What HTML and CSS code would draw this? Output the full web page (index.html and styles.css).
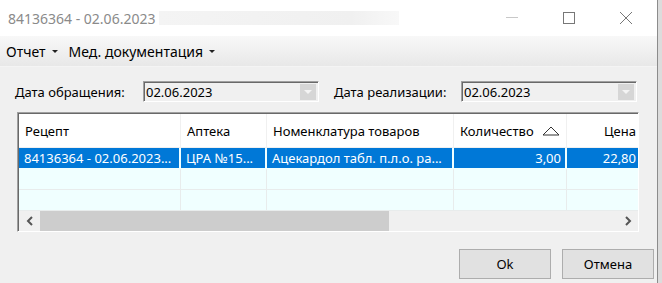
FILE: index.html
```html
<!DOCTYPE html>
<html lang="ru">
<head>
    <meta charset="UTF-8">
    <title>84136364 - 02.06.2023</title>
    <link rel="stylesheet" href="styles.css">
</head>
<body>
    <div class="window">
        <div class="titlebar">
            <span class="titlebar__text">84136364 - 02.06.2023</span>
            <span class="titlebar__blur"></span>
            <div class="titlebar__controls">
                <span class="ctl ctl--min"><svg width="14" height="14" viewBox="0 0 14 14"><path d="M1 6.5h12" stroke="#c8c8c8" stroke-width="1"/></svg></span>
                <span class="ctl ctl--max"><svg width="14" height="14" viewBox="0 0 14 14"><rect x="1.5" y="1.5" width="11" height="11" fill="none" stroke="#777" stroke-width="1"/></svg></span>
                <span class="ctl ctl--close"><svg width="14" height="14" viewBox="0 0 14 14"><path d="M1 1L13 13M13 1L1 13" stroke="#777" stroke-width="1"/></svg></span>
            </div>
        </div>

        <div class="menubar">
            <span class="menu-item">Отчет <i class="caret"></i></span>
            <span class="menu-item">Мед. документация <i class="caret"></i></span>
        </div>

        <div class="content">
            <div class="dates">
                <label class="dates__label dates__label--first">Дата обращения:</label>
                <div class="combo">
                    <span class="combo__value">02.06.2023</span>
                    <span class="combo__btn"><i></i></span>
                </div>
                <label class="dates__label dates__label--second">Дата реализации:</label>
                <div class="combo">
                    <span class="combo__value">02.06.2023</span>
                    <span class="combo__btn"><i></i></span>
                </div>
            </div>

            <div class="grid">
                <div class="grid__row grid__row--head">
                    <div class="cell c1">Рецепт</div>
                    <div class="cell c2">Аптека</div>
                    <div class="cell c3">Номенклатура товаров</div>
                    <div class="cell c4">Количество
                        <svg class="sort" width="18" height="10" viewBox="0 0 18 10"><path d="M1 9L9 1L17 9Z" fill="none" stroke="#333" stroke-width="1"/></svg>
                    </div>
                    <div class="cell c5 num">Цена</div>
                </div>
                <div class="grid__row grid__row--sel">
                    <div class="cell c1">84136364 - 02.06.2023...</div>
                    <div class="cell c2">ЦРА №15...</div>
                    <div class="cell c3">Ацекардол табл. п.л.о. ра...</div>
                    <div class="cell c4 num">3,00</div>
                    <div class="cell c5 num">22,80</div>
                </div>
                <div class="grid__row">
                    <div class="cell c1"></div><div class="cell c2"></div><div class="cell c3"></div><div class="cell c4"></div><div class="cell c5"></div>
                </div>
                <div class="grid__row">
                    <div class="cell c1"></div><div class="cell c2"></div><div class="cell c3"></div><div class="cell c4"></div><div class="cell c5"></div>
                </div>
                <div class="hscroll">
                    <span class="hscroll__arrow"><svg width="8" height="10" viewBox="0 0 8 10"><path d="M6 1L2 5L6 9" fill="none" stroke="#555" stroke-width="2"/></svg></span>
                    <span class="hscroll__thumb"></span>
                    <span class="hscroll__track"></span>
                    <span class="hscroll__arrow"><svg width="8" height="10" viewBox="0 0 8 10"><path d="M2 1L6 5L2 9" fill="none" stroke="#555" stroke-width="2"/></svg></span>
                </div>
            </div>

            <div class="actions">
                <button class="button">Ok</button>
                <button class="button">Отмена</button>
            </div>
        </div>
    </div>
    <div class="desktop"></div>
</body>
</html>
```

FILE: styles.css
```css
* {
    margin: 0;
    padding: 0;
    box-sizing: border-box;
}

body {
    display: flex;
    width: 662px;
    height: 283px;
    overflow: hidden;
    font-family: "Noto Sans", "Liberation Sans", sans-serif;
    font-size: 13px;
    color: #000;
    background: #f0f0f0;
}

.window {
    width: 658px;
    height: 283px;
    background: #f0f0f0;
    border-right: 1px solid #8c8c8c;
    display: flex;
    flex-direction: column;
}

.desktop {
    flex: 1;
    background: #dcdcdc;
}

/* Title bar */
.titlebar {
    height: 36px;
    background: #fff;
    display: flex;
    align-items: center;
    padding-left: 8px;
}

.titlebar__text {
    font-size: 14px;
    color: #8a8a8a;
}

.titlebar__blur {
    width: 240px;
    height: 14px;
    margin-left: 4px;
    background: linear-gradient(90deg, #f4f4f4 0%, #f0f0f0 80%, #f8f8f8 100%);
}

.titlebar__controls {
    margin-left: auto;
    display: flex;
    height: 100%;
    align-items: center;
    padding-right: 3px;
}

.ctl {
    width: 57px;
    display: flex;
    justify-content: center;
}

.ctl svg {
    display: block;
}

/* Menu */
.menubar {
    height: 31px;
    display: flex;
    align-items: center;
    gap: 11px;
    padding-left: 6px;
    background: linear-gradient(#f8f8f8, #e8e8e8);
    border-bottom: 1px solid #f4f4f4;
    font-size: 14px;
}

.menu-item {
    display: flex;
    align-items: center;
    gap: 6px;
}

.caret {
    width: 0;
    height: 0;
    border-left: 3px solid transparent;
    border-right: 3px solid transparent;
    border-top: 3px solid #222;
}

/* Content */
.content {
    flex: 1;
    padding: 14px 0 0 17px;
    display: flex;
    flex-direction: column;
}

.dates {
    display: flex;
    align-items: center;
    height: 21px;
}

.dates__label--first {
    width: 128px;
    margin-left: -2px;
}

.dates__label--second {
    width: 127px;
    margin-left: 15px;
}

.combo {
    width: 176px;
    height: 21px;
    display: flex;
    align-items: center;
    background: #f0f0f0;
    border-top: 1px solid #a0a0a0;
    border-left: 1px solid #a0a0a0;
    border-right: 1px solid #fff;
    border-bottom: 1px solid #fff;
    box-shadow: inset 1px 1px 0 #696969;
    padding-left: 2px;
    padding-right: 2px;
}

.combo__value {
    flex: 1;
}

.combo__btn {
    width: 16px;
    height: 16px;
    background: #d6d6d6;
    display: flex;
    align-items: center;
    justify-content: center;
}

.combo__btn i {
    width: 0;
    height: 0;
    border-left: 4px solid transparent;
    border-right: 4px solid transparent;
    border-top: 4px solid #f4f4f4;
}

/* Grid */
.grid {
    width: 622px;
    margin-top: 10px;
    border-top: 1px solid #a0a0a0;
    border-left: 1px solid #a0a0a0;
    border-right: 1px solid #fff;
    border-bottom: 1px solid #fff;
    box-shadow: inset 1px 1px 0 #696969;
    padding: 1px 0 0 1px;
    background: #fff;
    overflow: hidden;
}

.grid__row {
    display: flex;
    height: 21px;
    background: #f0ffff;
    border-bottom: 1px solid #e8ecec;
}

.grid__row--head {
    height: 34px;
    background: #fff;
    border-bottom: 1px solid #f0f0f0;
}

.grid__row--sel {
    background: #0078d7;
    color: #fff;
    border-bottom: 1px solid #f0ffff;
}

.cell {
    flex: none;
    display: flex;
    align-items: center;
    padding: 0 4px 0 5px;
    border-right: 1px solid #e8ecec;
    white-space: nowrap;
    overflow: hidden;
}

.grid__row--head .cell {
    padding-left: 6px;
    border-right: 1px solid #f0f0f0;
}

.grid__row--sel .cell {
    border-right: 2px solid #f0ffff;
}

.c1 { width: 162px; }
.c2 { width: 86px; }
.c3 { width: 187px; }
.c4 { width: 113px; }
.c5 { width: 71px; border-right: none; }

.grid__row .c5 {
    border-right: none;
    padding-right: 2px;
}

.num {
    justify-content: flex-end;
}

.sort {
    margin-left: 8px;
}

/* Scrollbar */
.hscroll {
    display: flex;
    height: 20px;
    background: #f0f0f0;
}

.hscroll__arrow {
    width: 21px;
    display: flex;
    align-items: center;
    justify-content: center;
}

.hscroll__thumb {
    width: 349px;
    background: #cdcdcd;
}

.hscroll__track {
    flex: 1;
}

/* Buttons */
.actions {
    display: flex;
    justify-content: flex-end;
    gap: 11px;
    margin-top: 17px;
    padding-right: 3px;
}

.button {
    width: 92px;
    height: 30px;
    background: #e1e1e1;
    border: 1px solid #adadad;
    font-family: inherit;
    font-size: 13px;
    color: #000;
}
```
